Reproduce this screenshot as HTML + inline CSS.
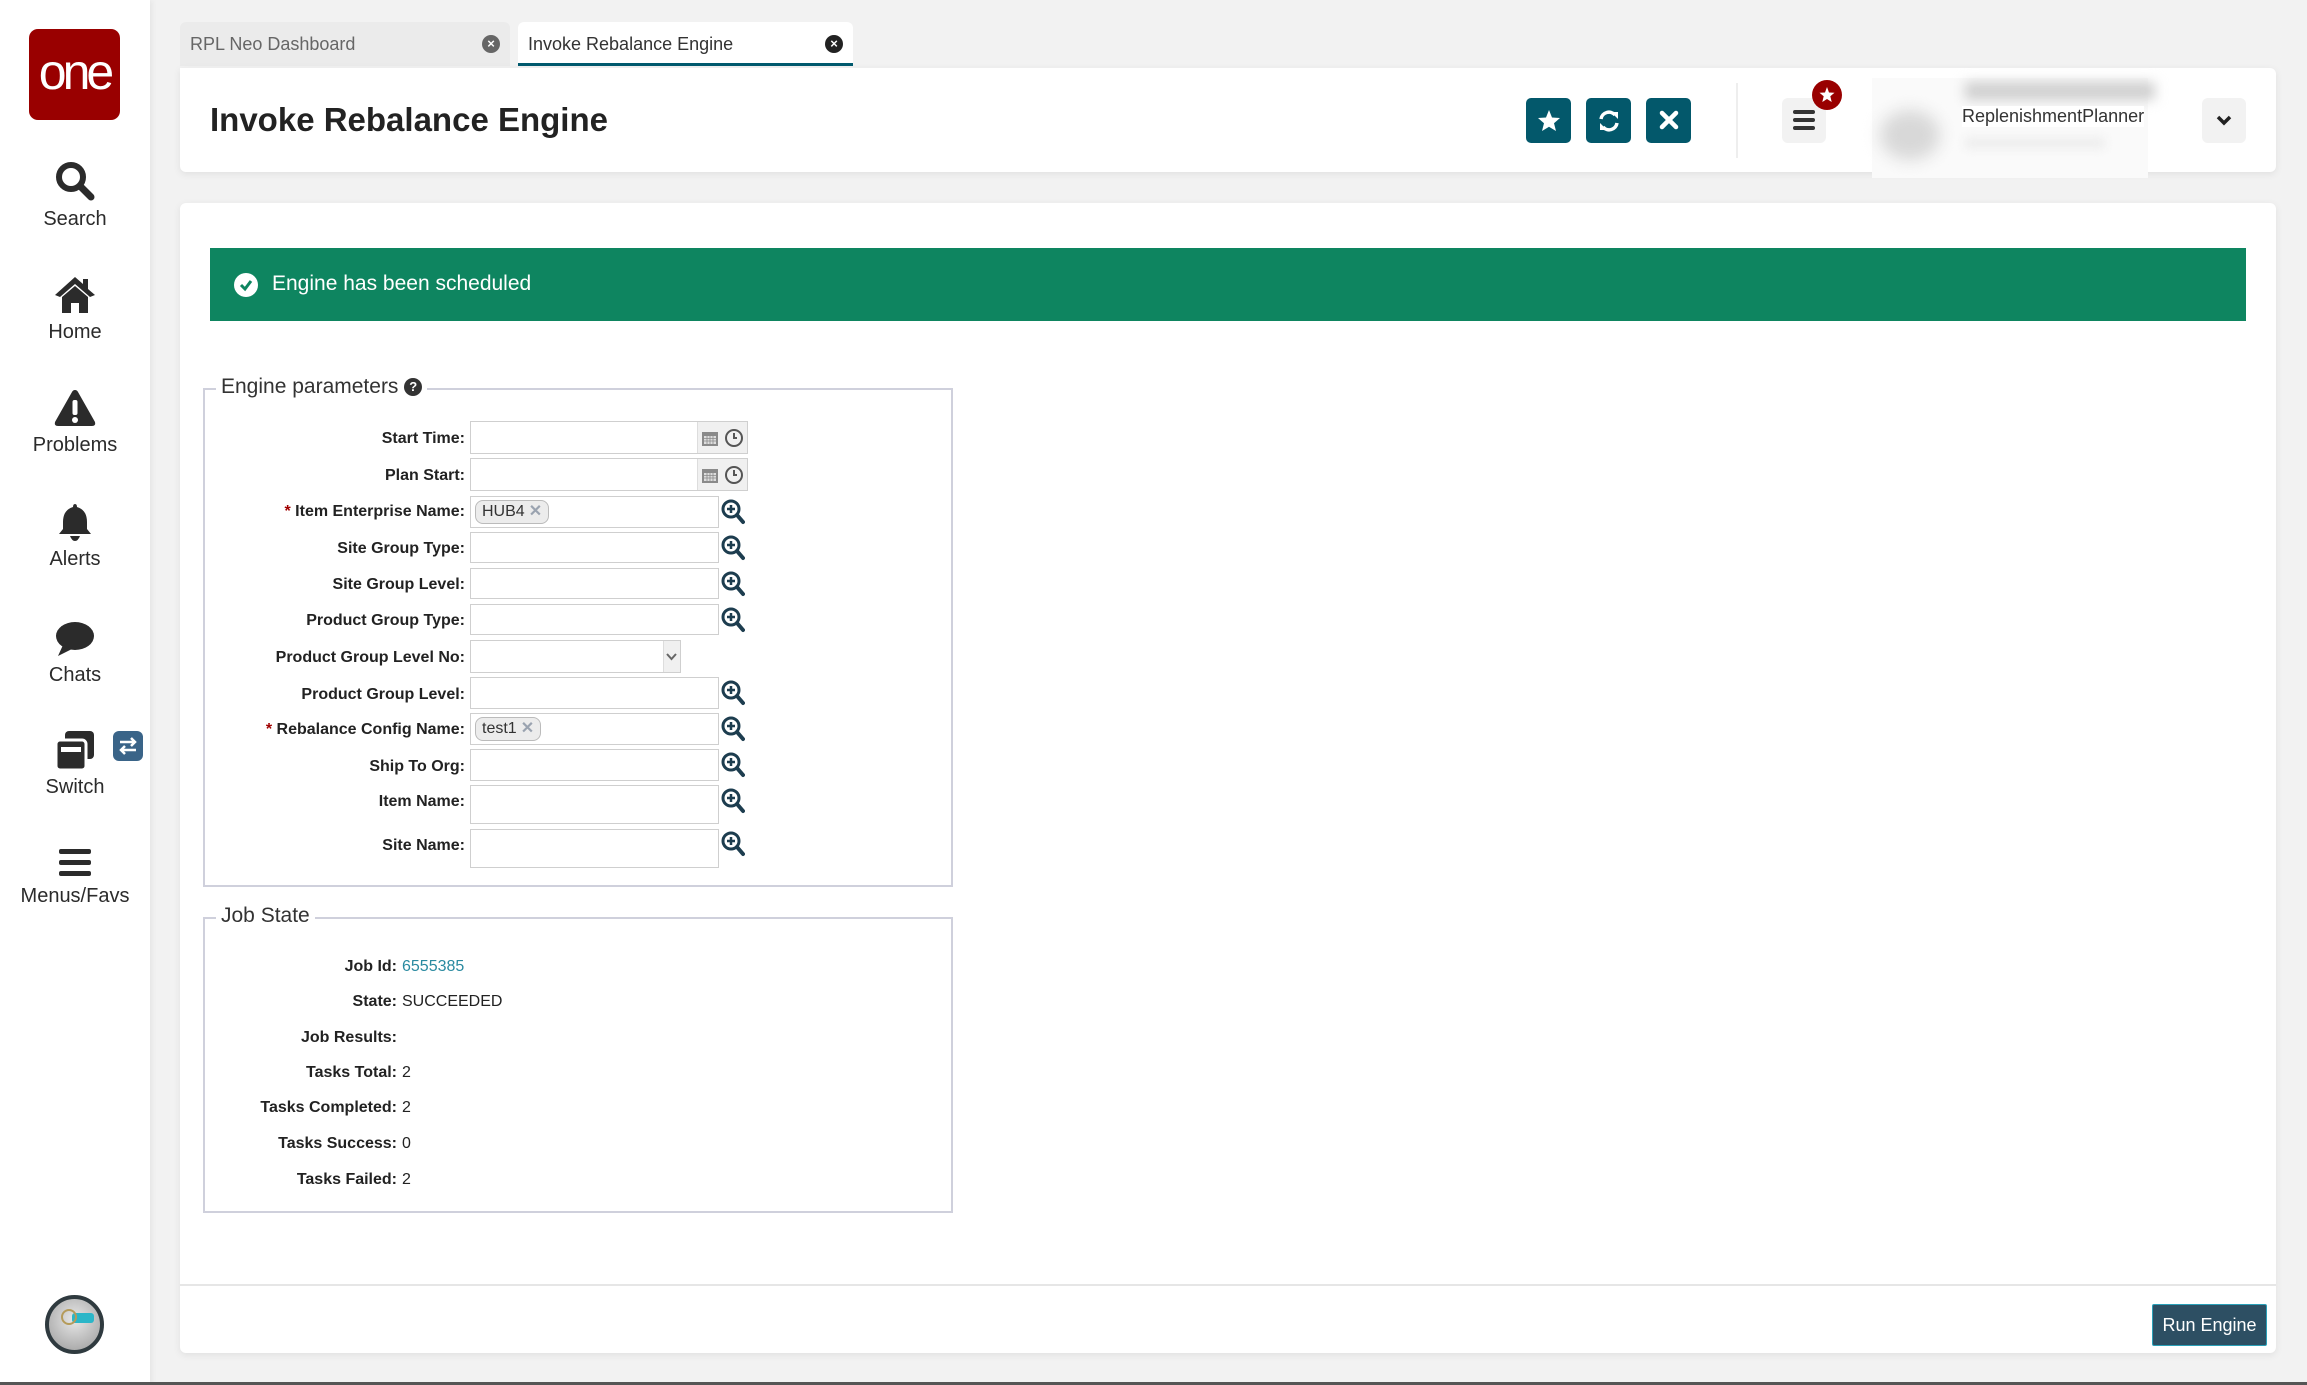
<!DOCTYPE html>
<html><head><meta charset="utf-8">
<style>
*{box-sizing:border-box;margin:0;padding:0}
body{width:2307px;height:1385px;background:#f2f2f2;font-family:"Liberation Sans",sans-serif;color:#222;position:relative;overflow:hidden}
.a{position:absolute}
.side{left:0;top:0;width:150px;height:1385px;background:#fff;box-shadow:2px 0 6px rgba(0,0,0,.06)}
.nav{position:absolute;left:0;width:150px;text-align:center;font-size:20px;color:#2b2b2b}
.nav svg{display:block;margin:0 auto 6px}
.tab{top:22px;height:44px;border-radius:6px 6px 0 0;font-size:18px;line-height:44px;padding-left:10px}
.card{background:#fff;border-radius:6px;box-shadow:0 2px 8px rgba(0,0,0,.08)}
.btn{width:45px;height:45px;border-radius:5px;background:#03586b;top:98px}
.btn svg{display:block;margin:11px auto}
.fs{border:2px solid #cfd0dc}
.leg{background:#fff;font-size:21px;color:#333;padding:0 5px}
.lbl{position:absolute;right:0;font-weight:bold;font-size:16px;white-space:nowrap}
.row{position:absolute;left:203px;width:262px;height:20px;margin-top:3px}
.inp{position:absolute;left:470px;width:249px;border:1px solid #cfcfcf;background:#fff}
.mag{position:absolute;left:721px}
.chip{position:absolute;left:4px;top:3px;height:24px;border:1px solid #bbb;border-radius:8px;background:#ececec;font-size:16px;line-height:22px;padding:0 6px;color:#333}
.chip b{color:#9aa3b0;font-weight:bold;margin-left:4px}
.req{color:#a00000}
.js{position:absolute;right:1910px;font-size:16px;white-space:nowrap;margin-top:3px}
.jl{position:absolute;font-size:16px;white-space:nowrap;margin-top:3px}
</style></head><body>

<div class="a side">
  <div class="a" style="left:29px;top:29px;width:91px;height:91px;background:#990000;border-radius:9px;color:#fff;font-size:50px;line-height:86px;text-align:center;letter-spacing:-4px;font-family:'Liberation Sans',sans-serif">one</div>

  <div class="nav" style="top:160px"><svg width="42" height="42" viewBox="0 0 42 42"><circle cx="17" cy="17" r="12" fill="none" stroke="#2b2b2b" stroke-width="6"/><path d="M26 26 L37 37" stroke="#2b2b2b" stroke-width="7" stroke-linecap="round"/></svg>Search</div>
  <div class="nav" style="top:275px"><svg width="44" height="40" viewBox="0 0 44 40"><path d="M22 2 L2 20 L7 22 L22 9 L37 22 L42 20 L35 14 L35 4 L30 4 L30 9 Z" fill="#2b2b2b"/><path d="M9 22 L22 11 L35 22 L35 38 L26 38 L26 28 L18 28 L18 38 L9 38 Z" fill="#2b2b2b"/></svg>Home</div>
  <div class="nav" style="top:388px"><svg width="44" height="40" viewBox="0 0 44 40"><path d="M22 2 Q24 2 25 4 L42 34 Q43 38 39 38 L5 38 Q1 38 2 34 L19 4 Q20 2 22 2Z" fill="#2b2b2b"/><rect x="19.5" y="12" width="5" height="15" rx="2" fill="#fff"/><circle cx="22" cy="32" r="3" fill="#fff"/></svg>Problems</div>
  <div class="nav" style="top:502px"><svg width="40" height="40" viewBox="0 0 40 40"><path d="M20 2 Q22 2 22 5 Q32 8 32 20 L32 27 L36 32 L4 32 L8 27 L8 20 Q8 8 18 5 Q18 2 20 2Z" fill="#2b2b2b"/><path d="M15 34 L25 34 Q23 39 20 39 Q17 39 15 34Z" fill="#2b2b2b"/></svg>Alerts</div>
  <div class="nav" style="top:620px"><svg width="42" height="38" viewBox="0 0 42 38"><ellipse cx="21" cy="16" rx="19" ry="14" fill="#2b2b2b"/><path d="M9 25 L4 36 L18 29Z" fill="#2b2b2b"/></svg>Chats</div>
  <div class="nav" style="top:730px"><svg width="42" height="40" viewBox="0 0 42 40"><rect x="11" y="1" width="29" height="28" rx="4" fill="#2b2b2b"/><rect x="2" y="10" width="30" height="30" rx="4" fill="#2b2b2b" stroke="#fff" stroke-width="3"/><rect x="7" y="17" width="20" height="5" fill="#fff"/></svg>Switch</div>
  <div class="a" style="left:113px;top:731px;width:30px;height:30px;background:#3a6488;border-radius:6px"><svg width="30" height="30" viewBox="0 0 30 30"><path d="M7 11 H22 M18 7 L22 11 L18 15 M23 19 H8 M12 15 L8 19 L12 23" stroke="#fff" stroke-width="2.5" fill="none"/></svg></div>
  <div class="nav" style="top:847px"><svg width="36" height="32" viewBox="0 0 36 32"><rect x="2" y="2" width="32" height="5" rx="2" fill="#2b2b2b"/><rect x="2" y="13" width="32" height="5" rx="2" fill="#2b2b2b"/><rect x="2" y="24" width="32" height="5" rx="2" fill="#2b2b2b"/></svg>Menus/Favs</div>
  <div class="a" style="left:45px;top:1295px;width:59px;height:59px;border-radius:50%;background:radial-gradient(circle at 50% 40%,#e8e8e8,#9a9a9a);border:4px solid #2f3a3f"><div class="a" style="left:23px;top:14px;width:22px;height:10px;background:#2bb6c8;border-radius:3px"></div><div class="a" style="left:12px;top:10px;width:16px;height:16px;border:2px solid #b59b5a;border-radius:50%"></div></div>
</div>

<div class="a tab" style="left:180px;width:330px;background:#ebebeb;color:#666">RPL Neo Dashboard<span class="a" style="right:10px;top:13px;width:18px;height:18px;border-radius:50%;background:#666;color:#fff;font-size:13px;line-height:18px;text-align:center;font-weight:bold">×</span></div>
<div class="a tab" style="left:518px;width:335px;background:#fff;color:#333;border-bottom:3px solid #005a6e">Invoke Rebalance Engine<span class="a" style="right:10px;top:13px;width:18px;height:18px;border-radius:50%;background:#222;color:#fff;font-size:13px;line-height:18px;text-align:center;font-weight:bold">×</span></div>

<div class="a card" style="left:180px;top:68px;width:2096px;height:104px;border-radius:0 6px 6px 6px"></div>
<div class="a" style="left:210px;top:101px;font-size:33px;font-weight:bold;color:#222">Invoke Rebalance Engine</div>
<div class="a btn" style="left:1526px"><svg width="24" height="23" viewBox="0 0 24 23"><path d="M12 1 L15 8.5 L23 9 L17 14.3 L19 22 L12 17.8 L5 22 L7 14.3 L1 9 L9 8.5Z" fill="#fff"/></svg></div>
<div class="a btn" style="left:1586px"><svg width="24" height="24" viewBox="0 0 24 24"><path d="M4 10 A8 8 0 0 1 18 6" stroke="#fff" stroke-width="3.5" fill="none"/><path d="M14 3 L21 3 L21 10Z" fill="#fff"/><path d="M20 14 A8 8 0 0 1 6 18" stroke="#fff" stroke-width="3.5" fill="none"/><path d="M10 21 L3 21 L3 14Z" fill="#fff"/></svg></div>
<div class="a btn" style="left:1646px"><svg width="22" height="22" viewBox="0 0 22 22"><path d="M4 4 L18 18 M18 4 L4 18" stroke="#fff" stroke-width="4.5" stroke-linecap="round"/></svg></div>
<div class="a" style="left:1736px;top:83px;width:2px;height:75px;background:#eee"></div>
<div class="a" style="left:1782px;top:98px;width:44px;height:45px;background:#f2f2f2;border-radius:6px"><div class="a" style="left:11px;top:12px;width:22px;height:4px;background:#333;border-radius:2px"></div><div class="a" style="left:11px;top:20px;width:22px;height:4px;background:#333;border-radius:2px"></div><div class="a" style="left:11px;top:28px;width:22px;height:4px;background:#333;border-radius:2px"></div></div>
<div class="a" style="left:1812px;top:80px;width:30px;height:30px;border-radius:50%;background:#990000"><svg width="30" height="30" viewBox="0 0 30 30"><path d="M15 7 L17 12.5 L22.5 12.8 L18.3 16.3 L19.7 22 L15 19 L10.3 22 L11.7 16.3 L7.5 12.8 L13 12.5Z" fill="#fff"/></svg></div>
<div class="a" style="left:1872px;top:78px;width:276px;height:100px;background:#fafafa"></div>
<div class="a" style="left:1880px;top:110px;width:60px;height:50px;border-radius:50%;background:#d8d8d8;filter:blur(8px)"></div>
<div class="a" style="left:1965px;top:82px;width:190px;height:18px;background:#cfcfcf;filter:blur(6px)"></div>
<div class="a" style="left:1965px;top:138px;width:140px;height:10px;background:#ececec;filter:blur(5px)"></div>
<div class="a" style="left:1962px;top:106px;font-size:18px;color:#333;background:#fff">ReplenishmentPlanner</div>
<div class="a" style="left:2202px;top:98px;width:44px;height:45px;background:#f2f2f2;border-radius:6px"><svg width="44" height="45" viewBox="0 0 44 45"><path d="M16 19 L22 25 L28 19" stroke="#222" stroke-width="3.5" fill="none"/></svg></div>

<div class="a card" style="left:180px;top:203px;width:2096px;height:1150px"></div>
<div class="a" style="left:180px;top:1284px;width:2096px;height:2px;background:#e6e6e6"></div>
<div class="a" style="left:2152px;top:1304px;width:115px;height:42px;background:#2d4f63;border:1px solid #2aa0b8;border-radius:2px;color:#fff;font-size:18px;line-height:40px;text-align:center">Run Engine</div>
<div class="a" style="left:0;top:1382px;width:2307px;height:3px;background:#555"></div>

<div class="a" style="left:210px;top:248px;width:2036px;height:73px;background:#0e8560"></div>
<div class="a" style="left:234px;top:273px;width:24px;height:24px;border-radius:50%;background:#fff"><svg width="24" height="24" viewBox="0 0 24 24"><path d="M7 12 L11 16 L17 8" stroke="#0e8560" stroke-width="3" fill="none"/></svg></div>
<div class="a" style="left:272px;top:272px;font-size:21px;color:#fff">Engine has been scheduled</div>

<div class="a fs" style="left:203px;top:388px;width:750px;height:499px"></div>
<div class="a leg" style="left:216px;top:375px">Engine parameters <span style="display:inline-block;width:18px;height:18px;border-radius:50%;background:#333;color:#fff;font-size:13px;line-height:18px;text-align:center;font-weight:bold;vertical-align:2px">?</span></div>

<div class="a fs" style="left:203px;top:917px;width:750px;height:296px"></div>
<div class="a leg" style="left:216px;top:904px">Job State</div>

<div class="row" style="top:427px"><span class="lbl">Start Time:</span></div>
<div class="inp" style="top:421px;width:278px;height:33px"><div class="a" style="right:0;top:0;width:50px;height:31px;background:#f0f0f0;border-left:1px solid #ddd"></div><svg class="a" style="right:28px;top:7px" width="18" height="18" viewBox="0 0 18 18"><rect x="1" y="3" width="16" height="14" fill="#8a8a8a"/><rect x="3" y="7" width="12" height="8" fill="#ddd"/><path d="M3 9.5H15M3 12H15M6 7V15M9 7V15M12 7V15" stroke="#8a8a8a" stroke-width=".8"/></svg><svg class="a" style="right:3px;top:6px" width="20" height="20" viewBox="0 0 20 20"><circle cx="10" cy="10" r="8" fill="none" stroke="#555" stroke-width="2"/><path d="M10 5V10H13" stroke="#555" stroke-width="2" fill="none"/></svg></div>
<div class="row" style="top:464px"><span class="lbl">Plan Start:</span></div>
<div class="inp" style="top:458px;width:278px;height:33px"><div class="a" style="right:0;top:0;width:50px;height:31px;background:#f0f0f0;border-left:1px solid #ddd"></div><svg class="a" style="right:28px;top:7px" width="18" height="18" viewBox="0 0 18 18"><rect x="1" y="3" width="16" height="14" fill="#8a8a8a"/><rect x="3" y="7" width="12" height="8" fill="#ddd"/><path d="M3 9.5H15M3 12H15M6 7V15M9 7V15M12 7V15" stroke="#8a8a8a" stroke-width=".8"/></svg><svg class="a" style="right:3px;top:6px" width="20" height="20" viewBox="0 0 20 20"><circle cx="10" cy="10" r="8" fill="none" stroke="#555" stroke-width="2"/><path d="M10 5V10H13" stroke="#555" stroke-width="2" fill="none"/></svg></div>

<div class="row" style="top:500px"><span class="lbl"><span class="req">*</span> Item Enterprise Name:</span></div>
<div class="inp" style="top:496px;height:32px"><div class="chip">HUB4<b>✕</b></div></div>
<div class="row" style="top:537px"><span class="lbl">Site Group Type:</span></div>
<div class="inp" style="top:532px;height:31px"></div>
<div class="row" style="top:573px"><span class="lbl">Site Group Level:</span></div>
<div class="inp" style="top:568px;height:31px"></div>
<div class="row" style="top:609px"><span class="lbl">Product Group Type:</span></div>
<div class="inp" style="top:604px;height:31px"></div>
<div class="row" style="top:646px"><span class="lbl">Product Group Level No:</span></div>
<div class="inp" style="top:640px;width:211px;height:33px"><div class="a" style="right:0;top:0;width:17px;height:31px;background:#f0f0f0;border-left:1px solid #ddd"></div><svg class="a" style="right:2px;top:11px" width="13" height="10" viewBox="0 0 13 10"><path d="M2 2 L6.5 7 L11 2" stroke="#666" stroke-width="2" fill="none"/></svg></div>
<div class="row" style="top:683px"><span class="lbl">Product Group Level:</span></div>
<div class="inp" style="top:677px;height:32px"></div>
<div class="row" style="top:718px"><span class="lbl"><span class="req">*</span> Rebalance Config Name:</span></div>
<div class="inp" style="top:713px;height:32px"><div class="chip">test1<b>✕</b></div></div>
<div class="row" style="top:755px"><span class="lbl">Ship To Org:</span></div>
<div class="inp" style="top:749px;height:32px"></div>
<div class="row" style="top:790px"><span class="lbl">Item Name:</span></div>
<div class="inp" style="top:785px;height:39px"></div>
<div class="row" style="top:834px"><span class="lbl">Site Name:</span></div>
<div class="inp" style="top:829px;height:39px"></div>

<svg class="mag" style="top:499px" width="24" height="26" viewBox="0 0 24 26"><circle cx="10" cy="10" r="8" fill="none" stroke="#1d3d4f" stroke-width="3"/><path d="M10 6V14M6 10H14" stroke="#1d3d4f" stroke-width="2.5"/><path d="M16 16L22 23" stroke="#1d3d4f" stroke-width="4" stroke-linecap="round"/></svg>
<svg class="mag" style="top:535px" width="24" height="26" viewBox="0 0 24 26"><circle cx="10" cy="10" r="8" fill="none" stroke="#1d3d4f" stroke-width="3"/><path d="M10 6V14M6 10H14" stroke="#1d3d4f" stroke-width="2.5"/><path d="M16 16L22 23" stroke="#1d3d4f" stroke-width="4" stroke-linecap="round"/></svg>
<svg class="mag" style="top:571px" width="24" height="26" viewBox="0 0 24 26"><circle cx="10" cy="10" r="8" fill="none" stroke="#1d3d4f" stroke-width="3"/><path d="M10 6V14M6 10H14" stroke="#1d3d4f" stroke-width="2.5"/><path d="M16 16L22 23" stroke="#1d3d4f" stroke-width="4" stroke-linecap="round"/></svg>
<svg class="mag" style="top:607px" width="24" height="26" viewBox="0 0 24 26"><circle cx="10" cy="10" r="8" fill="none" stroke="#1d3d4f" stroke-width="3"/><path d="M10 6V14M6 10H14" stroke="#1d3d4f" stroke-width="2.5"/><path d="M16 16L22 23" stroke="#1d3d4f" stroke-width="4" stroke-linecap="round"/></svg>
<svg class="mag" style="top:680px" width="24" height="26" viewBox="0 0 24 26"><circle cx="10" cy="10" r="8" fill="none" stroke="#1d3d4f" stroke-width="3"/><path d="M10 6V14M6 10H14" stroke="#1d3d4f" stroke-width="2.5"/><path d="M16 16L22 23" stroke="#1d3d4f" stroke-width="4" stroke-linecap="round"/></svg>
<svg class="mag" style="top:716px" width="24" height="26" viewBox="0 0 24 26"><circle cx="10" cy="10" r="8" fill="none" stroke="#1d3d4f" stroke-width="3"/><path d="M10 6V14M6 10H14" stroke="#1d3d4f" stroke-width="2.5"/><path d="M16 16L22 23" stroke="#1d3d4f" stroke-width="4" stroke-linecap="round"/></svg>
<svg class="mag" style="top:752px" width="24" height="26" viewBox="0 0 24 26"><circle cx="10" cy="10" r="8" fill="none" stroke="#1d3d4f" stroke-width="3"/><path d="M10 6V14M6 10H14" stroke="#1d3d4f" stroke-width="2.5"/><path d="M16 16L22 23" stroke="#1d3d4f" stroke-width="4" stroke-linecap="round"/></svg>
<svg class="mag" style="top:788px" width="24" height="26" viewBox="0 0 24 26"><circle cx="10" cy="10" r="8" fill="none" stroke="#1d3d4f" stroke-width="3"/><path d="M10 6V14M6 10H14" stroke="#1d3d4f" stroke-width="2.5"/><path d="M16 16L22 23" stroke="#1d3d4f" stroke-width="4" stroke-linecap="round"/></svg>
<svg class="mag" style="top:831px" width="24" height="26" viewBox="0 0 24 26"><circle cx="10" cy="10" r="8" fill="none" stroke="#1d3d4f" stroke-width="3"/><path d="M10 6V14M6 10H14" stroke="#1d3d4f" stroke-width="2.5"/><path d="M16 16L22 23" stroke="#1d3d4f" stroke-width="4" stroke-linecap="round"/></svg>

<div class="js" style="top:955px"><b>Job Id:</b></div><div class="jl" style="left:402px;top:955px;color:#2a8aa0">6555385</div>
<div class="js" style="top:990px"><b>State:</b></div><div class="jl" style="left:402px;top:990px">SUCCEEDED</div>
<div class="js" style="top:1026px"><b>Job Results:</b></div>
<div class="js" style="top:1061px"><b>Tasks Total:</b></div><div class="jl" style="left:402px;top:1061px">2</div>
<div class="js" style="top:1096px"><b>Tasks Completed:</b></div><div class="jl" style="left:402px;top:1096px">2</div>
<div class="js" style="top:1132px"><b>Tasks Success:</b></div><div class="jl" style="left:402px;top:1132px">0</div>
<div class="js" style="top:1168px"><b>Tasks Failed:</b></div><div class="jl" style="left:402px;top:1168px">2</div>

</body></html>
